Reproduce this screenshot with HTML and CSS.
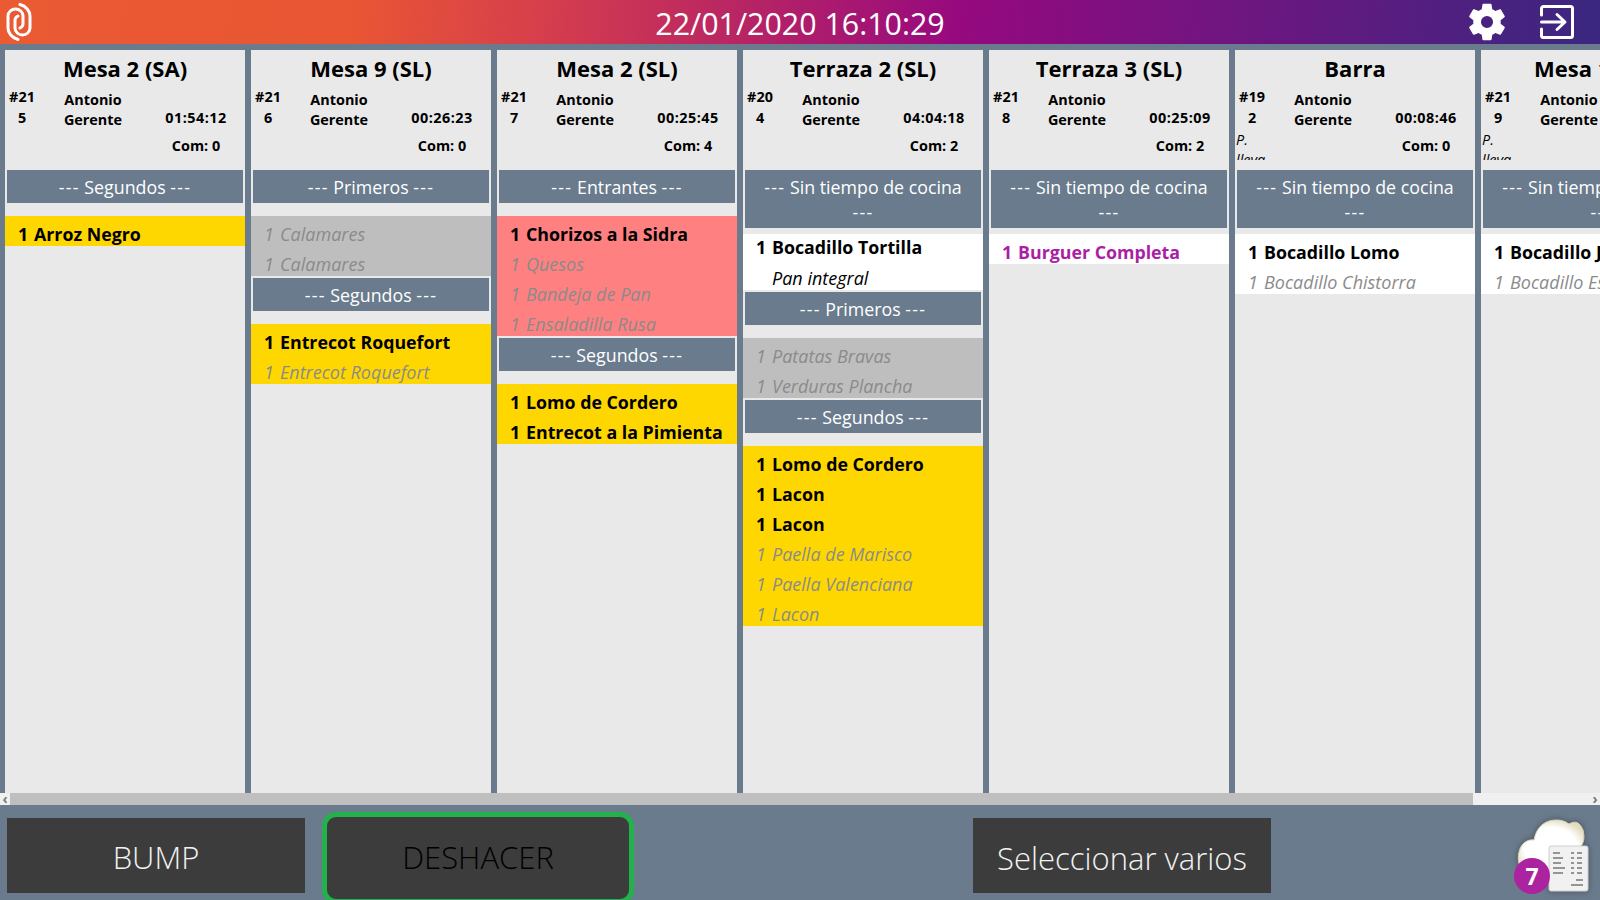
FILE: index.html
```html
<!DOCTYPE html>
<html lang="es">
<head>
<meta charset="utf-8">
<title>KDS</title>
<link rel="stylesheet" href="styles.css">
</head>
<body>
<header class="topbar">
  <svg class="logo" viewBox="0 0 26 38" fill="none" stroke="#fff" stroke-width="3" stroke-linecap="round">
    <path d="M14 1.500C20 3 24 8 24 13V25C24 29 20.500 32 16.500 32 12.500 32 9 29 9 25V17C9 15.500 10 14 12 13"/>
    <path d="M12 36.500C6 35 2 30 2 25V13C2 9 5.500 6 9.500 6 13.500 6 17 9 17 13V21C17 22.500 16 24 14 25"/>
  </svg>
  <div class="clock">22/01/2020 16:10:29</div>
  <svg class="gear" viewBox="0 0 24 24" fill="#fff"><path d="M19.430 12.980c.04-.32.07-.64.07-.98s-.03-.66-.07-.98l2.110-1.650c.19-.15.24-.42.12-.64l-2-3.460c-.12-.22-.39-.3-.61-.22l-2.490 1c-.52-.4-1.080-.73-1.690-.98l-.38-2.650A.49.49 0 0 0 14 2h-4c-.25 0-.46.18-.49.42l-.38 2.650c-.61.25-1.170.59-1.690.98l-2.490-1c-.23-.09-.49 0-.61.22l-2 3.460c-.13.22-.07.49.12.64l2.110 1.650c-.04.32-.07.65-.07.98s.03.66.07.98l-2.110 1.650c-.19.15-.24.42-.12.64l2 3.460c.12.22.39.3.61.22l2.490-1c.52.4 1.080.73 1.690.98l.38 2.650c.03.24.24.42.49.42h4c.25 0 .46-.18.49-.42l.38-2.650c.61-.25 1.170-.59 1.690-.98l2.490 1c.23.09.49 0 .61-.22l2-3.460c.12-.22.07-.49-.12-.64l-2.110-1.650zM12 15.300A3.300 3.300 0 1 1 12 8.700a3.300 3.300 0 0 1 0 6.600z"/></svg>
  <svg class="exit" viewBox="0 0 34 34" fill="none" stroke="#fff" stroke-width="3" stroke-linejoin="round" stroke-linecap="round">
    <path d="M1.500 10V3.500a2 2 0 0 1 2-2h27a2 2 0 0 1 2 2v27a2 2 0 0 1-2 2h-27a2 2 0 0 1-2-2V24"/>
    <path d="M1.500 17H24M17 9.500l8 7.500-8 7.500"/>
  </svg>
</header>

<main class="board">
  <section class="ticket">
    <h2 class="title">Mesa 2 (SA)</h2>
    <div class="meta">
      <div class="num">#215</div>
      <div class="staff">Antonio<br>Gerente</div>
      <div class="stats"><span class="time">01:54:12</span><span class="com">Com: 0</span></div>
    </div>
    <div class="course"><span class="dash">---</span> Segundos <span class="dash">---</span></div>
    <div class="items yellow">
      <div class="item"><b>1</b><b>Arroz Negro</b></div>
    </div>
  </section>

  <section class="ticket">
    <h2 class="title">Mesa 9 (SL)</h2>
    <div class="meta">
      <div class="num">#216</div>
      <div class="staff">Antonio<br>Gerente</div>
      <div class="stats"><span class="time">00:26:23</span><span class="com">Com: 0</span></div>
    </div>
    <div class="course"><span class="dash">---</span> Primeros <span class="dash">---</span></div>
    <div class="items grey">
      <div class="item done"><i>1</i><i>Calamares</i></div>
      <div class="item done"><i>1</i><i>Calamares</i></div>
    </div>
    <div class="course"><span class="dash">---</span> Segundos <span class="dash">---</span></div>
    <div class="items yellow">
      <div class="item"><b>1</b><b>Entrecot Roquefort</b></div>
      <div class="item done"><i>1</i><i>Entrecot Roquefort</i></div>
    </div>
  </section>

  <section class="ticket">
    <h2 class="title">Mesa 2 (SL)</h2>
    <div class="meta">
      <div class="num">#217</div>
      <div class="staff">Antonio<br>Gerente</div>
      <div class="stats"><span class="time">00:25:45</span><span class="com">Com: 4</span></div>
    </div>
    <div class="course"><span class="dash">---</span> Entrantes <span class="dash">---</span></div>
    <div class="items salmon">
      <div class="item"><b>1</b><b>Chorizos a la Sidra</b></div>
      <div class="item done"><i>1</i><i>Quesos</i></div>
      <div class="item done"><i>1</i><i>Bandeja de Pan</i></div>
      <div class="item done"><i>1</i><i>Ensaladilla Rusa</i></div>
    </div>
    <div class="course"><span class="dash">---</span> Segundos <span class="dash">---</span></div>
    <div class="items yellow">
      <div class="item"><b>1</b><b>Lomo de Cordero</b></div>
      <div class="item"><b>1</b><b>Entrecot a la Pimienta</b></div>
    </div>
  </section>

  <section class="ticket">
    <h2 class="title">Terraza 2 (SL)</h2>
    <div class="meta">
      <div class="num">#204</div>
      <div class="staff">Antonio<br>Gerente</div>
      <div class="stats"><span class="time">04:04:18</span><span class="com">Com: 2</span></div>
    </div>
    <div class="course tall"><span class="dash">---</span> Sin tiempo de cocina <span class="dash">---</span></div>
    <div class="items white short">
      <div class="item"><b>1</b><b>Bocadillo Tortilla</b></div>
      <div class="item note"><i></i><i>Pan integral</i></div>
    </div>
    <div class="course"><span class="dash">---</span> Primeros <span class="dash">---</span></div>
    <div class="items grey">
      <div class="item done"><i>1</i><i>Patatas Bravas</i></div>
      <div class="item done"><i>1</i><i>Verduras Plancha</i></div>
    </div>
    <div class="course"><span class="dash">---</span> Segundos <span class="dash">---</span></div>
    <div class="items yellow">
      <div class="item"><b>1</b><b>Lomo de Cordero</b></div>
      <div class="item"><b>1</b><b>Lacon</b></div>
      <div class="item"><b>1</b><b>Lacon</b></div>
      <div class="item done"><i>1</i><i>Paella de Marisco</i></div>
      <div class="item done"><i>1</i><i>Paella Valenciana</i></div>
      <div class="item done"><i>1</i><i>Lacon</i></div>
    </div>
  </section>

  <section class="ticket">
    <h2 class="title">Terraza 3 (SL)</h2>
    <div class="meta">
      <div class="num">#218</div>
      <div class="staff">Antonio<br>Gerente</div>
      <div class="stats"><span class="time">00:25:09</span><span class="com">Com: 2</span></div>
    </div>
    <div class="course tall"><span class="dash">---</span> Sin tiempo de cocina <span class="dash">---</span></div>
    <div class="items white">
      <div class="item purple"><b>1</b><b>Burguer Completa</b></div>
    </div>
  </section>

  <section class="ticket">
    <h2 class="title">Barra</h2>
    <div class="meta">
      <div class="num">#192<em>P. lleva</em></div>
      <div class="staff">Antonio<br>Gerente</div>
      <div class="stats"><span class="time">00:08:46</span><span class="com">Com: 0</span></div>
    </div>
    <div class="course tall"><span class="dash">---</span> Sin tiempo de cocina <span class="dash">---</span></div>
    <div class="items white">
      <div class="item"><b>1</b><b>Bocadillo Lomo</b></div>
      <div class="item done"><i>1</i><i>Bocadillo Chistorra</i></div>
    </div>
  </section>

  <section class="ticket">
    <h2 class="title">Mesa 10 (SL)</h2>
    <div class="meta">
      <div class="num">#219<em>P. lleva</em></div>
      <div class="staff">Antonio<br>Gerente</div>
      <div class="stats"><span class="time">00:05:31</span><span class="com">Com: 0</span></div>
    </div>
    <div class="course tall"><span class="dash">---</span> Sin tiempo de cocina <span class="dash">---</span></div>
    <div class="items white">
      <div class="item"><b>1</b><b>Bocadillo Jamon</b></div>
      <div class="item done"><i>1</i><i>Bocadillo Especial</i></div>
    </div>
  </section>
</main>

<div class="scrollbar">
  <div class="arrow">&#8249;</div>
  <div class="thumb"></div>
  <div class="arrow right">&#8250;</div>
</div>

<footer class="actions">
  <button class="btn bump">BUMP</button>
  <button class="btn undo">DESHACER</button>
  <button class="btn multi">Seleccionar varios</button>
  <div class="cloud">
    <svg class="cloud-art" viewBox="0 0 76 80">
      <defs>
        <radialGradient id="cg" cx="50%" cy="55%" r="58%">
          <stop offset="0.700" stop-color="#ffffff"/>
          <stop offset="1" stop-color="#e2dcc0"/>
        </radialGradient>
      </defs>
      <path class="cloud-shape" fill="url(#cg)" d="M14 56C5 56 3 44 5 36 7 27 14 23 20 24 22 12 30 4 42 4 49 4 52 6 55 8 62 4 66 7 69 14 71 22 70 28 64 34L40 56z"/>
      <rect class="paper" x="35" y="30" width="39" height="45" rx="2"/>
      <path class="paper-lines" d="M39 37h7M57 37h3M63 37h5M39 42h10M57 42h3M63 42h5M39 47h8M57 47h3M63 47h5M39 52h12M57 52h3M63 52h5M39 57h10M57 57h3M63 57h5M62 64h7M57 69h12"/>
    </svg>
    <span class="badge">7</span>
  </div>
</footer>
</body>
</html>
```
FILE: styles.css
```css
* { box-sizing: border-box; }
html, body { margin: 0; height: 100%; }
body {
  width: 1600px;
  height: 900px;
  overflow: hidden;
  display: flex;
  flex-direction: column;
  background: #6a7b8d;
  font-family: "Open Sans", "Noto Sans", "Liberation Sans", sans-serif;
  color: #000;
}

.topbar {
  height: 44px;
  flex: none;
  display: flex;
  align-items: center;
  color: #fff;
  background: linear-gradient(94deg, #ea5a33 0%, #e85633 22%, #d8404a 33%, #96097f 60%, #7a1280 72%, #3a2780 100%);
}
.logo { width: 26px; height: 38px; margin-left: 6px; flex: none; }
.clock {
  position: absolute;
  left: 0;
  top: 2px;
  width: 1600px;
  text-align: center;
  font-size: 30.400px;
  line-height: 44px;
}
.gear { width: 44px; height: 44px; margin-left: auto; flex: none; }
.exit { width: 34px; height: 34px; margin: 0 26px 0 31px; flex: none; }

.board {
  flex: none;
  height: 743px;
  margin-top: 6px;
  padding-left: 5px;
  display: flex;
  gap: 6px;
  overflow: hidden;
}
.ticket {
  width: 240px;
  flex: none;
  background: #e9e9e9;
  overflow: hidden;
}
.title {
  margin: 0;
  height: 36px;
  text-align: center;
  font-size: 22px;
  line-height: 36px;
  font-weight: 700;
  white-space: nowrap;
}
.meta {
  display: grid;
  grid-template-columns: 34px 108px 98px;
  height: 76px;
  overflow: hidden;
  font-size: 14.400px;
  font-weight: 700;
}
.num {
  width: 34px;
  height: 74px;
  padding: 1px 2px 0;
  line-height: 20.500px;
  text-align: center;
  word-break: break-all;
  overflow: hidden;
}
.num em {
  display: block;
  margin: 2px 0 0 -1px;
  text-align: left;
  font-weight: 400;
  word-break: normal;
  line-height: 20px;
}
.staff {
  padding-top: 4px;
  line-height: 20px;
  text-align: center;
}
.stats {
  display: flex;
  flex-direction: column;
  align-items: center;
  padding-top: 22px;
}
.time { line-height: 20px; letter-spacing: .5px; }
.com { line-height: 20px; margin-top: 8px; }

.course {
  margin: 8px 2px 13px;
  min-height: 33px;
  padding: 3px 10px 1px;
  background: #6a7b8d;
  color: #fff;
  text-align: center;
  font-size: 17.800px;
  line-height: 29px;
}
.dash { display: inline-block; letter-spacing: 1.300px; }
.course.tall { margin-bottom: 6px; line-height: 25px; padding: 5px 10px 3px; }
.items + .course { margin-top: 2px; }
.items { padding-left: 13px; }
.yellow { background: #ffd700; }
.grey { background: #bebebe; }
.salmon { background: #ff8080; }
.white { background: #fff; }
.item {
  display: flex;
  height: 30px;
  line-height: 36px;
  font-size: 18px;
  white-space: nowrap;
  overflow: hidden;
}
.item > * { display: block; }
.item > :first-child { width: 16px; flex: none; }
.item b { font-weight: 700; font-size: 17.800px; }
.item i { font-style: italic; }
.item.done { color: #8b8b8b; }
.item.purple { color: #ab1fa5; }
.items.short .item { line-height: 26px; }
.items.short .item.note { height: 26px; line-height: 28px; }

.scrollbar {
  height: 12px;
  flex: none;
  display: flex;
  background: #f0f0f0;
  color: #777;
  font-size: 14px;
  font-weight: 700;
  line-height: 11px;
}
.arrow { width: 10px; flex: none; text-align: center; }
.arrow.right { margin-left: auto; }
.thumb { width: 1463px; background: #bfbfbf; }

.actions {
  flex: 1;
  position: relative;
  display: flex;
  align-items: flex-start;
  padding: 13px 0 0 7px;
}
.btn {
  width: 298px;
  height: 75px;
  border: 0;
  padding: 3px 0 0;
  background: #3c3c3c;
  color: #f2f2f2;
  font-family: inherit;
  font-size: 31px;
  font-weight: 350;
}
.undo {
  width: 312px;
  height: 92px;
  margin: -6px 0 0 17px;
  padding: 0 0 2px;
  border: 5px solid #22b14c;
  border-radius: 14px;
  color: #000;
}
.multi { margin-left: 339px; padding-top: 4px; font-size: 31px; }
.cloud { position: absolute; left: 1514px; top: 11px; width: 76px; height: 80px; }
.cloud-art { width: 76px; height: 80px; display: block; filter: drop-shadow(0 0 3px rgba(40,40,40,.5)) blur(.5px); }
.cloud-shape { stroke: #d8d4b8; stroke-width: 1; }
.paper { fill: #f1f1f1; stroke: #cfcfcf; stroke-width: 1; }
.paper-lines { stroke: #777; stroke-width: 1.300; fill: none; }
.badge {
  position: absolute;
  left: 0;
  top: 42px;
  width: 36px;
  height: 36px;
  border-radius: 50%;
  background: #ab239f;
  color: #fff;
  text-align: center;
  font-size: 23px;
  font-weight: 700;
  line-height: 36px;
}
```
